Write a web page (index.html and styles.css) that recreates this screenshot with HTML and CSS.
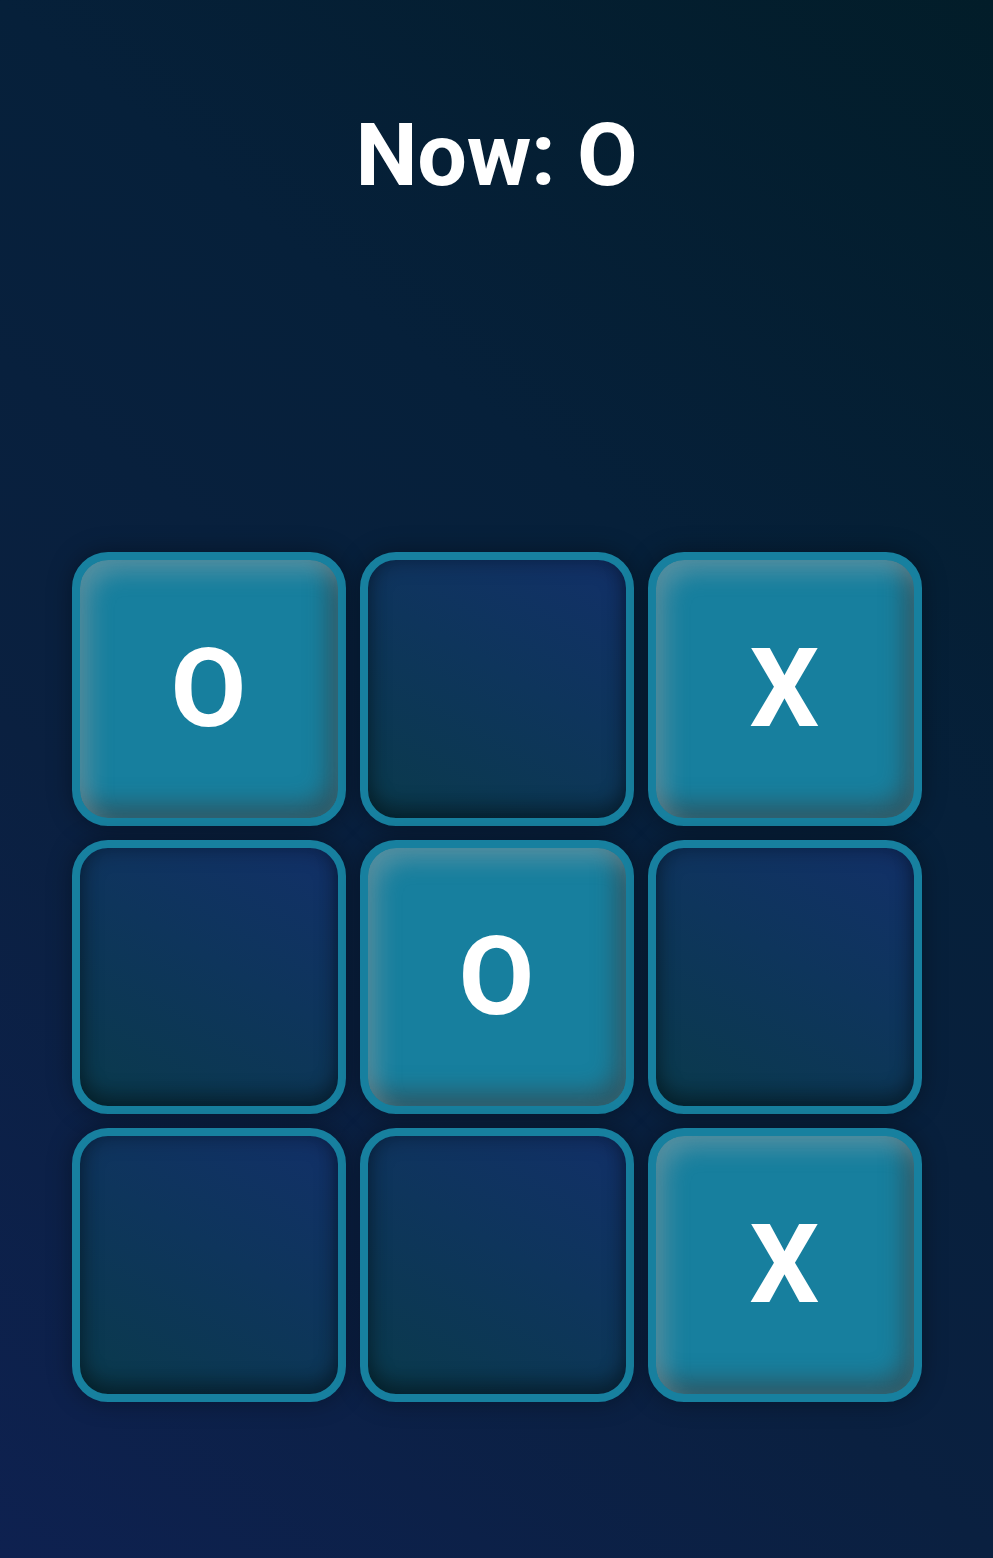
FILE: index.html
```html
<!DOCTYPE html>
<html lang="en">
<head>
<meta charset="utf-8">
<title>Tic Tac Toe</title>
<link rel="stylesheet" href="styles.css">
</head>
<body>
<main class="page">
  <h1 class="status">Now: O</h1>
  <div class="board">
    <div class="cell filled">O</div>
    <div class="cell"></div>
    <div class="cell filled">X</div>
    <div class="cell"></div>
    <div class="cell filled">O</div>
    <div class="cell"></div>
    <div class="cell"></div>
    <div class="cell"></div>
    <div class="cell filled">X</div>
  </div>
</main>
</body>
</html>
```

FILE: styles.css
```css
html, body {
  margin: 0;
  padding: 0;
}
body {
  width: 993px;
  min-height: 1558px;
  background: linear-gradient(220deg, #021d29 0%, #06203a 35%, #0a2040 65%, #0e2150 100%);
  font-family: Roboto, "Noto Sans", sans-serif;
  color: #ffffff;
}
.page {
  display: flex;
  flex-direction: column;
  align-items: center;
}
.status {
  margin: 103px 0 0;
  font-size: 88px;
  font-weight: 700;
  line-height: normal;
  letter-spacing: -0.3px;
}
.board {
  margin-top: 346px;
  display: grid;
  grid-template-columns: repeat(3, 274px);
  grid-auto-rows: 274px;
  gap: 14px;
}
.cell {
  box-sizing: border-box;
  border: 8px solid #17809f;
  border-radius: 36px;
  background: linear-gradient(210deg, #123068 0%, #0e355c 45%, #0a3a4c 100%);
  box-shadow: inset 0 0 22px rgba(0, 0, 0, 0.35), inset 0 -14px 18px rgba(0, 0, 0, 0.25), 0 0 24px rgba(0, 0, 0, 0.35);
  display: flex;
  align-items: center;
  justify-content: center;
  font-size: 110px;
  font-weight: 700;
  color: #ffffff;
  line-height: 1;
}
.cell.filled {
  background: #177f9e;
  box-shadow: inset 10px 12px 22px rgba(170, 170, 170, 0.4), inset -10px -14px 22px rgba(60, 60, 60, 0.55), 0 0 24px rgba(0, 0, 0, 0.35);
}
```
